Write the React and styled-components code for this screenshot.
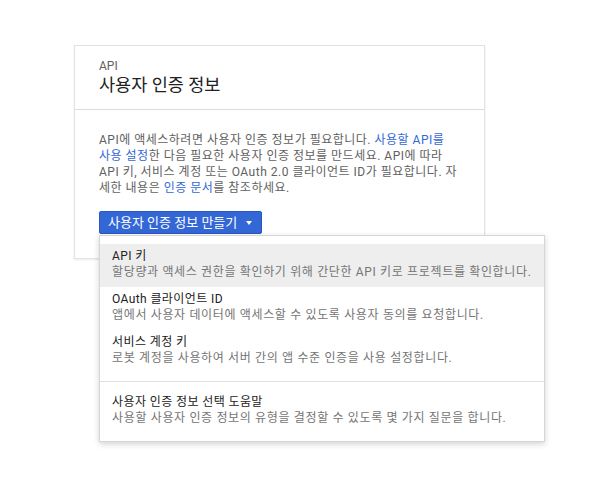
import React from 'react';
import styled, { createGlobalStyle } from 'styled-components';

const GlobalStyle = createGlobalStyle`
  html, body {
    margin: 0;
    padding: 0;
    background: #ffffff;
  }
  body {
    font-family: Roboto, "Noto Sans CJK KR", sans-serif;
    color: #212121;
  }
`;

const Page = styled.div`
  padding: 45px 0 0 74px;
  min-height: 479px;
  box-sizing: border-box;
`;

const Card = styled.section`
  width: 411px;
  box-sizing: border-box;
  background: #fff;
  border: 1px solid #e2e2e2;
  box-shadow: 0 1px 2px rgba(0, 0, 0, 0.08);
`;

const CardHeader = styled.header`
  padding: 13px 24px 12px;
  border-bottom: 1px solid #dcdcdc;
`;

const Eyebrow = styled.div`
  font-size: 12px;
  line-height: 14px;
  color: #616161;
`;

const Title = styled.h1`
  margin: 0;
  font-size: 17.5px;
  font-weight: 400;
  line-height: 24px;
  color: #212121;
`;

const CardBody = styled.div`
  padding: 22px 24px 24px;
`;

const Paragraph = styled.p`
  margin: 0;
  font-size: 12px;
  line-height: 16px;
  letter-spacing: 0.5px;
  color: #616161;
  white-space: nowrap;
`;

const Link = styled.a`
  color: #3367d6;
  text-decoration: none;
`;

const ButtonWrap = styled.div`
  position: relative;
  margin-top: 15px;
  display: inline-block;
`;

const PrimaryButton = styled.button`
  display: flex;
  align-items: center;
  gap: 9px;
  height: 23px;
  padding: 0 9px 0 8px;
  border: 1px solid #2a56c6;
  border-radius: 2px;
  background: #3367d6;
  color: #fff;
  font-family: inherit;
  font-size: 13px;
  line-height: 21px;
  cursor: pointer;
`;

const Caret = styled.span`
  width: 0;
  height: 0;
  border-left: 3.5px solid transparent;
  border-right: 3.5px solid transparent;
  border-top: 4px solid #fff;
  margin-top: 1px;
`;

const Menu = styled.div`
  position: absolute;
  top: calc(100% + 1px);
  left: 0;
  z-index: 10;
  width: 446px;
  box-sizing: border-box;
  padding: 8px 0;
  background: #fff;
  border: 1px solid #d6d6d6;
  box-shadow: 0 2px 6px rgba(0, 0, 0, 0.18);
`;

const MenuItem = styled.div`
  padding: 4px 12px 7px;
  background: ${(p) => (p.$active ? '#eeeeee' : 'transparent')};
  white-space: nowrap;
  cursor: pointer;
`;

const ItemTitle = styled.div`
  font-size: 12px;
  line-height: 16px;
  letter-spacing: 0.4px;
  color: #212121;
`;

const ItemDesc = styled.div`
  font-size: 12px;
  line-height: 16px;
  letter-spacing: 0.65px;
  color: #757575;
`;

const Divider = styled.div`
  height: 1px;
  margin: 8px 0;
  background: #e0e0e0;
`;

const items = [
  {
    title: 'API 키',
    desc: '할당량과 액세스 권한을 확인하기 위해 간단한 API 키로 프로젝트를 확인합니다.',
    active: true,
  },
  {
    title: 'OAuth 클라이언트 ID',
    desc: '앱에서 사용자 데이터에 액세스할 수 있도록 사용자 동의를 요청합니다.',
  },
  {
    title: '서비스 계정 키',
    desc: '로봇 계정을 사용하여 서버 간의 앱 수준 인증을 사용 설정합니다.',
  },
];

const App = () => {
  return (
    <>
      <GlobalStyle />
      <Page>
        <Card>
          <CardHeader>
            <Eyebrow>API</Eyebrow>
            <Title>사용자 인증 정보</Title>
          </CardHeader>
          <CardBody>
            <Paragraph>
              API에 액세스하려면 사용자 인증 정보가 필요합니다. <Link href="#">사용할 API를</Link>
              <br />
              <Link href="#">사용 설정</Link>한 다음 필요한 사용자 인증 정보를 만드세요. API에 따라
              <br />
              API 키, 서비스 계정 또는 OAuth 2.0 클라이언트 ID가 필요합니다. 자
              <br />
              세한 내용은 <Link href="#">인증 문서</Link>를 참조하세요.
            </Paragraph>
            <ButtonWrap>
              <PrimaryButton>
                사용자 인증 정보 만들기
                <Caret />
              </PrimaryButton>
              <Menu>
                {items.map((item) => (
                  <MenuItem key={item.title} $active={item.active}>
                    <ItemTitle>{item.title}</ItemTitle>
                    <ItemDesc>{item.desc}</ItemDesc>
                  </MenuItem>
                ))}
                <Divider />
                <MenuItem>
                  <ItemTitle>사용자 인증 정보 선택 도움말</ItemTitle>
                  <ItemDesc>사용할 사용자 인증 정보의 유형을 결정할 수 있도록 몇 가지 질문을 합니다.</ItemDesc>
                </MenuItem>
              </Menu>
            </ButtonWrap>
          </CardBody>
        </Card>
      </Page>
    </>
  );
};

export default App;
